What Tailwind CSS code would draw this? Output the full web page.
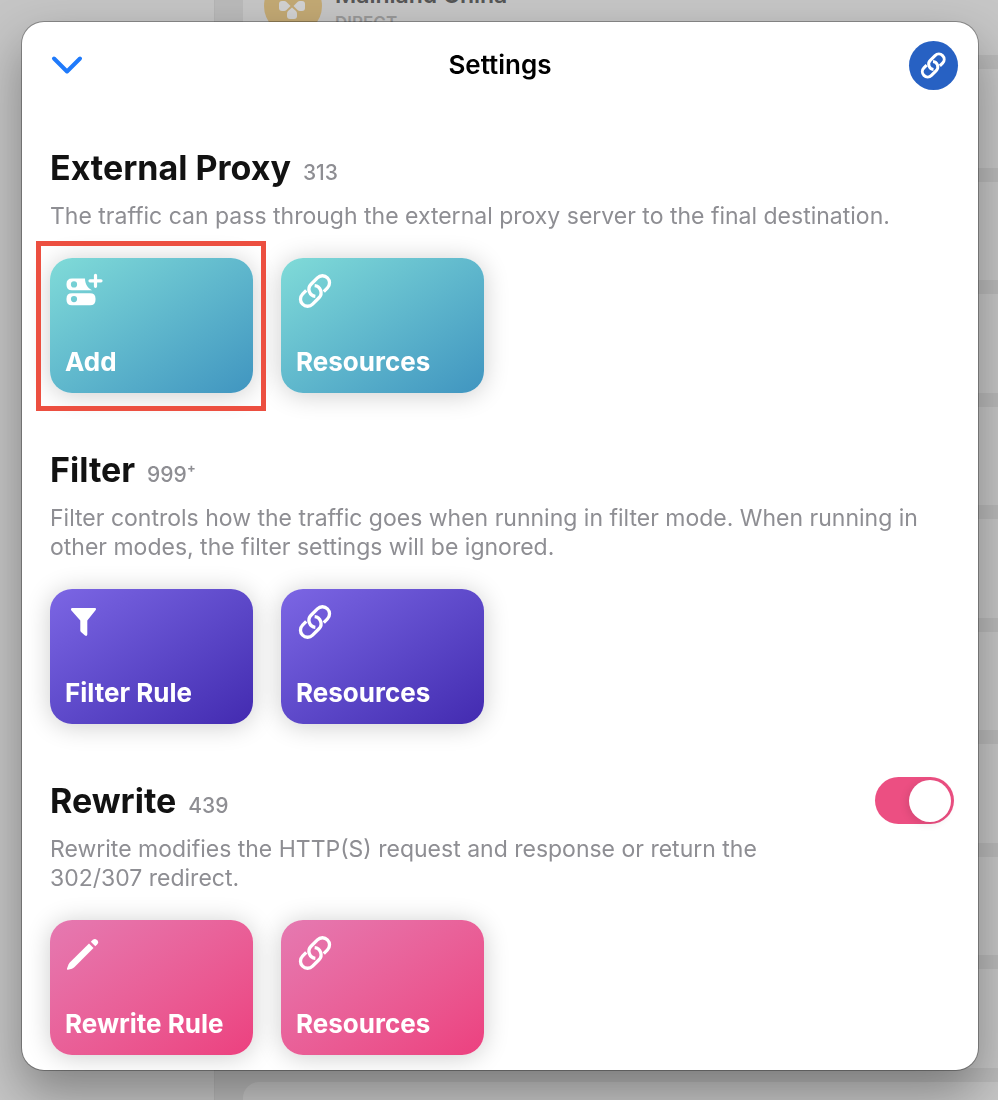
<!DOCTYPE html>
<html lang="en">
<head>
    <meta charset="UTF-8">
    <meta name="viewport" content="width=device-width, initial-scale=1.0">
    <title>Settings</title>
    <script src="https://cdn.jsdelivr.net/npm/@tailwindcss/browser@4"></script>
</head>
<body class="bg-[#c2c2c2] text-[#121212] font-['Inter',sans-serif]">

    <!-- shared icons -->
    <svg class="hidden" aria-hidden="true">
        <symbol id="icon-link" viewBox="0 0 40 36">
            <g transform="translate(19 18) rotate(-45)" fill="none" stroke="currentColor">
                <path d="M5.800 6.600H11A7.100 7.100 0 0 0 11 -7.600H2A7.100 7.100 0 0 0 -3.500 4"/>
                <path d="M-5.800 -6.600H-11A7.100 7.100 0 0 0 -11 7.600H-2A7.100 7.100 0 0 0 3.500 -4"/>
            </g>
        </symbol>
    </svg>

    <!-- dimmed page behind the sheet -->
    <div class="fixed inset-0 overflow-hidden flex" aria-hidden="true">
        <div class="w-[215px] shrink-0 bg-[#c5c5c5] border-r border-[#b5b5b5]"></div>
        <div class="flex-1 bg-[#bababa] pl-7 -mt-[43px] -mb-[80px] flex flex-col gap-[14px]">
            <div class="flex-1 rounded-l-2xl bg-[#c6c6c6] flex items-center gap-3 pl-5">
                <svg class="size-[60px]" viewBox="0 0 60 60">
                    <circle cx="30" cy="30" r="29" fill="#c3a974"/>
                    <g fill="#d2d2d2">
                        <path d="M29 31.500L33 35Q34 36 34 37.500V40Q34 43 31 43H27Q24 43 24 40V37.500Q24 36 25 35Z"/>
                        <path d="M27.500 30L23.500 34Q22.500 35 21 35H19Q16 35 16 32V28Q16 25 19 25H21Q22.500 25 23.500 26Z"/>
                        <path d="M30.500 30L34.500 34Q35.500 35 37 35H39Q42 35 42 32V28Q42 25 39 25H37Q35.500 25 34.500 26Z"/>
                    </g>
                </svg>
                <div class="pt-1.5">
                    <p class="text-[23px] leading-7 font-semibold text-[#555]">Mainland China</p>
                    <p class="text-[17px] leading-7 font-semibold text-[#999]">DIRECT</p>
                </div>
            </div>
            <div class="flex-1 rounded-l-2xl bg-[#c6c6c6]"></div>
            <div class="flex-1 rounded-l-2xl bg-[#c6c6c6]"></div>
            <div class="flex-1 rounded-l-2xl bg-[#c6c6c6]"></div>
            <div class="flex-1 rounded-l-2xl bg-[#c6c6c6]"></div>
            <div class="flex-1 rounded-l-2xl bg-[#c6c6c6]"></div>
            <div class="flex-1 rounded-l-2xl bg-[#c6c6c6]"></div>
            <div class="flex-1 rounded-l-2xl bg-[#c6c6c6]"></div>
            <div class="flex-1 rounded-l-2xl bg-[#c6c6c6]"></div>
            <div class="flex-1 rounded-l-2xl bg-[#c6c6c6]"></div>
            <div class="flex-1 rounded-l-2xl bg-[#c6c6c6]"></div>
        </div>
    </div>

    <div class="relative pl-[22px] pr-5 pt-[22px] pb-[30px]">
        <div class="bg-white rounded-[22px] pb-[15px] overflow-hidden shadow-[0_0_0_1px_rgba(0,0,0,0.3),0_22px_50px_rgba(0,0,0,0.35)]">

            <header class="grid grid-cols-3 items-center h-[86px] px-5">
                <button aria-label="Close" class="justify-self-start pl-[9px] text-[#1f7afb]">
                    <svg class="w-8 h-6" viewBox="0 0 32 24" fill="none" stroke="currentColor" stroke-width="4" stroke-linecap="round" stroke-linejoin="round">
                        <path d="M3 5.500L16 18.500L29 5.500"/>
                    </svg>
                </button>
                <h1 class="justify-self-center text-[26px] leading-8 font-semibold text-black">Settings</h1>
                <button aria-label="Links" class="justify-self-end size-[49px] rounded-full bg-[#2761c3] text-white flex items-center justify-center">
                    <svg class="w-[30px] h-[27px]" stroke-width="4"><use href="#icon-link"/></svg>
                </button>
            </header>

            <main class="px-7 pt-10 flex flex-col gap-[57px]">

                <section>
                    <div class="flex items-baseline gap-3">
                        <h2 class="text-[34px] leading-10 font-bold">External Proxy</h2>
                        <span class="text-[21px] leading-7 font-medium text-[#8e8e93]">313</span>
                    </div>
                    <p class="mt-[14px] text-[23px] leading-[29px] text-[#8e8e93]">The traffic can pass through the external proxy server to the final destination.</p>
                    <div class="mt-[27px] flex gap-7">
                        <div class="relative">
                            <button class="w-[203px] h-[135px] rounded-[22px] p-[15px] flex flex-col justify-between items-start text-white bg-linear-to-br from-[#80dbd8] to-[#4095c0] shadow-[0_2px_26px_rgba(0,0,0,0.2)]">
                                <svg class="w-10 h-9" viewBox="0 0 40 36" fill="currentColor">
                                    <path fill-rule="evenodd" d="M7 5.500H20C20 11 22.500 15 27 17.300H7Q1.500 17.300 1.500 12V11Q1.500 5.500 7 5.500ZM9 8.300a3.100 3.100 0 1 0 0 6.200a3.100 3.100 0 1 0 0-6.200Z"/>
                                    <path fill-rule="evenodd" d="M7 20.300H25Q30.500 20.300 30.500 25.500V27Q30.500 32.300 25 32.300H7Q1.500 32.300 1.500 27V25.500Q1.500 20.300 7 20.300ZM9 23a3.100 3.100 0 1 0 0 6.200a3.100 3.100 0 1 0 0-6.200Z"/>
                                    <path d="M30.500 2.300V13.300M25 7.800H36" stroke="currentColor" stroke-width="3.200" stroke-linecap="round"/>
                                </svg>
                                <span class="text-[26px] leading-8 font-bold">Add</span>
                            </button>
                            <div class="absolute -left-[14px] -right-[13px] -top-[17px] -bottom-[18px] border-5 border-[#ec4f40] pointer-events-none"></div>
                        </div>
                        <button class="w-[203px] h-[135px] rounded-[22px] p-[15px] flex flex-col justify-between items-start text-white bg-linear-to-br from-[#80dbd8] to-[#4095c0] shadow-[0_2px_26px_rgba(0,0,0,0.2)]">
                            <svg class="w-10 h-9" stroke-width="3.300"><use href="#icon-link"/></svg>
                            <span class="text-[26px] leading-8 font-bold">Resources</span>
                        </button>
                    </div>
                </section>

                <section>
                    <div class="flex items-baseline gap-3">
                        <h2 class="text-[34px] leading-10 font-bold">Filter</h2>
                        <span class="text-[21px] leading-7 font-medium text-[#8e8e93]">999⁺</span>
                    </div>
                    <p class="mt-[14px] text-[23px] leading-[29px] text-[#8e8e93]">Filter controls how the traffic goes when running in filter mode. When running in other modes, the filter settings will be ignored.</p>
                    <div class="mt-[27px] flex gap-7">
                        <button class="w-[203px] h-[135px] rounded-[22px] p-[15px] flex flex-col justify-between items-start text-white bg-linear-to-br from-[#7c66e4] to-[#432ab0] shadow-[0_2px_26px_rgba(0,0,0,0.2)]">
                            <svg class="w-10 h-9" viewBox="0 0 40 36" fill="currentColor">
                                <path d="M7 4H30Q31.800 4.300 30.500 6.300L22.300 16.500V30.500Q22 32.600 20 31.600L16 28Q15.300 27.300 15.300 26.500V16.500L6.200 6.300Q5.200 4.300 7 4Z"/>
                            </svg>
                            <span class="text-[26px] leading-8 font-bold">Filter Rule</span>
                        </button>
                        <button class="w-[203px] h-[135px] rounded-[22px] p-[15px] flex flex-col justify-between items-start text-white bg-linear-to-br from-[#7c66e4] to-[#432ab0] shadow-[0_2px_26px_rgba(0,0,0,0.2)]">
                            <svg class="w-10 h-9" stroke-width="3.300"><use href="#icon-link"/></svg>
                            <span class="text-[26px] leading-8 font-bold">Resources</span>
                        </button>
                    </div>
                </section>

                <section>
                    <div class="flex items-start justify-between gap-12">
                        <div>
                            <div class="flex items-baseline gap-3">
                                <h2 class="text-[34px] leading-10 font-bold">Rewrite</h2>
                                <span class="text-[21px] leading-7 font-medium text-[#8e8e93]">439</span>
                            </div>
                            <p class="mt-[14px] text-[23px] leading-[29px] text-[#8e8e93]">Rewrite modifies the HTTP(S) request and response or return the 302/307 redirect.</p>
                        </div>
                        <label class="relative shrink-0 -mt-1 -mr-1 cursor-pointer">
                            <input type="checkbox" role="switch" aria-label="Rewrite" checked class="peer appearance-none block w-[79px] h-[47px] rounded-full bg-[#c7c7cc] checked:bg-[#ec4f82]">
                            <span class="absolute top-[3px] left-[3px] peer-checked:left-[34px] size-[42px] rounded-full bg-white shadow-[-2px_2px_8px_rgba(0,0,0,0.1)]"></span>
                        </label>
                    </div>
                    <div class="mt-[27px] flex gap-7">
                        <button class="w-[203px] h-[135px] rounded-[22px] p-[15px] flex flex-col justify-between items-start text-white bg-linear-to-br from-[#e579b1] to-[#ec407f] shadow-[0_2px_26px_rgba(0,0,0,0.2)]">
                            <svg class="w-10 h-9" viewBox="0 0 40 36" fill="currentColor">
                                <path d="M24 8.500L28.500 13L9.300 32.300Q8.300 33.300 7 33.700L3 34.800Q1.500 35 2 33.500L3.500 29.500Q4 28.300 4.800 27.500Z"/>
                                <path d="M25.800 6.800L27.800 4.800Q30 3 32.200 5.200Q34.200 7.300 32.300 9.300L30.300 11.300Z"/>
                            </svg>
                            <span class="text-[26px] leading-8 font-bold">Rewrite Rule</span>
                        </button>
                        <button class="w-[203px] h-[135px] rounded-[22px] p-[15px] flex flex-col justify-between items-start text-white bg-linear-to-br from-[#e579b1] to-[#ec407f] shadow-[0_2px_26px_rgba(0,0,0,0.2)]">
                            <svg class="w-10 h-9" stroke-width="3.300"><use href="#icon-link"/></svg>
                            <span class="text-[26px] leading-8 font-bold">Resources</span>
                        </button>
                    </div>
                </section>

            </main>
        </div>
    </div>

</body>
</html>
